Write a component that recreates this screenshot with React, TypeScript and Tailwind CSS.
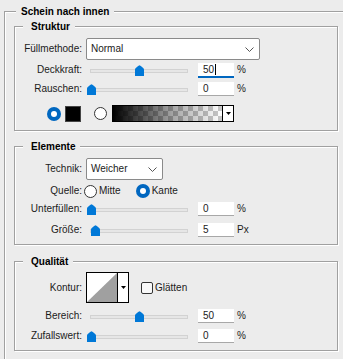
import React from 'react';

const Thumb = ({ center }: { center: number }) => (
  <svg
    className="absolute bottom-[1px]"
    style={{ left: center - 4.5 }}
    width="9"
    height="11"
    viewBox="0 0 9 11"
  >
    <path d="M4.5 0.3 C6 1.3 9 3 9 4.5 V11 H0 V4.5 C0 3 3 1.3 4.5 0.3 Z" fill="#0078d7" />
  </svg>
);

const Slider = ({ center }: { center: number }) => (
  <div className="relative flex items-end w-[106px] h-[14px] ml-[4px]">
    <div className="mx-[4px] mb-[4px] h-[4px] w-full bg-[#e6e6e6] border border-[#d2d2d2]" />
    <Thumb center={center} />
  </div>
);

const NumBox = ({ value, focused = false }: { value: string; focused?: boolean }) => (
  <div
    className={`ml-[6px] w-[36px] bg-white pl-[5px] flex items-center ${
      focused ? 'border-b-2 border-[#0067c0] h-[15px]' : 'border-b border-[#a8a8a8] h-[14px]'
    }`}
  >
    {value}
    {focused && <span className="ml-[1px] w-px h-[11px] bg-black" />}
  </div>
);

const Chevron = () => (
  <svg width="9" height="5" viewBox="0 0 9 5">
    <path d="M0.5 0.5 L4.5 4.5 L8.5 0.5" fill="none" stroke="#555" strokeWidth="1" />
  </svg>
);

const DownArrow = () => (
  <svg width="5" height="3" viewBox="0 0 5 3">
    <path d="M0 0 H5 L2.5 3 Z" fill="#000" />
  </svg>
);

const RadioOn = () => (
  <svg width="14" height="14" viewBox="0 0 14 14" className="shrink-0">
    <circle cx="7" cy="7" r="7" fill="#0067c0" />
    <circle cx="7" cy="7" r="3" fill="#fff" />
  </svg>
);

const RadioOff = () => <div className="w-[13px] h-[13px] rounded-full border border-[#333] bg-white shrink-0" />;

const Label = ({ children }: { children: React.ReactNode }) => (
  <div className="w-[67px] text-right shrink-0">{children}</div>
);

const SliderRow = ({
  label,
  center,
  value,
  unit,
  focused,
  mt,
}: {
  label: string;
  center: number;
  value: string;
  unit: string;
  focused?: boolean;
  mt: string;
}) => (
  <div className={`flex items-start h-[14px] ${mt}`}>
    <Label>{label}</Label>
    <Slider center={center} />
    <NumBox value={value} focused={focused} />
    <div className="ml-[3px]">{unit}</div>
  </div>
);

const Group = ({
  title,
  className,
  children,
}: {
  title: string;
  className: string;
  children: React.ReactNode;
}) => (
  <fieldset
    className={`w-[324px] border border-[#a0a0a0] shadow-[inset_1px_1px_0_#fff,1px_1px_0_#fff] ${className}`}
  >
    <legend className="ml-[8px] pl-[8px] pr-[5px] font-bold leading-[13px] bg-[#ececec] text-black">
      {title}
    </legend>
    {children}
  </fieldset>
);

export default function App() {
  return (
    <div
      className="w-[343px] h-[359px] overflow-hidden bg-[#ececec] text-[10px] leading-[14px] text-[#1b1b1b]"
      style={{ fontFamily: '"Liberation Sans", Arial, sans-serif' }}
    >
      <fieldset className="mt-[5px] ml-[4px] w-[360px] pl-[9px] pt-[2px] pb-[20px] border border-[#a0a0a0] shadow-[inset_1px_1px_0_#fff]">
        <legend className="ml-[2px] px-[5px] font-bold leading-[13px] bg-[#ececec] text-black">
          Schein nach innen
        </legend>

        {/* Struktur */}
        <Group title="Struktur" className="pb-[8px]">
          <div className="flex items-center h-[22px] mt-[5px]">
            <Label>Füllmethode:</Label>
            <div className="ml-[4px] w-[174px] h-[22px] bg-white border border-[#8a8a8a] rounded-[2px] flex items-center justify-between pl-[4px] pr-[5px]">
              <span>Normal</span>
              <Chevron />
            </div>
          </div>
          <SliderRow label="Deckkraft:" center={53.5} value="50" unit="%" focused mt="mt-[3px]" />
          <SliderRow label="Rauschen:" center={5} value="0" unit="%" mt="mt-[5px]" />
          <div className="flex items-center h-[17px] mt-[9px] pl-[32px]">
            <RadioOn />
            <div className="ml-[4px] w-[16px] h-[16px] bg-black border border-[#444]" />
            <div className="ml-[13px]">
              <RadioOff />
            </div>
            <div className="ml-[5px] w-[122px] h-[17px] border border-black flex">
              <div className="flex-1 [background-image:linear-gradient(to_right,#000,rgba(0,0,0,0.35)_55%,rgba(0,0,0,0)),repeating-conic-gradient(#c8c8c8_0_25%,#fff_0_50%)] [background-size:100%_100%,10px_10px]" />
              <div className="w-[11px] border-l border-black bg-white flex items-center justify-center">
                <DownArrow />
              </div>
            </div>
          </div>
        </Group>

        {/* Elemente */}
        <Group title="Elemente" className="mt-[9px] pb-[7px]">
          <div className="flex items-center h-[22px] mt-[5px]">
            <Label>Technik:</Label>
            <div className="ml-[4px] w-[77px] h-[22px] bg-white border border-[#8a8a8a] rounded-[2px] flex items-center justify-between pl-[4px] pr-[5px]">
              <span>Weicher</span>
              <Chevron />
            </div>
          </div>
          <div className="flex items-center h-[14px] mt-[4px]">
            <Label>Quelle:</Label>
            <div className="ml-[2px]">
              <RadioOff />
            </div>
            <span className="ml-[2px]">Mitte</span>
            <div className="ml-[15px]">
              <RadioOn />
            </div>
            <span className="ml-[2px]">Kante</span>
          </div>
          <SliderRow label="Unterfüllen:" center={5} value="0" unit="%" mt="mt-[4px]" />
          <SliderRow label="Größe:" center={9.5} value="5" unit="Px" mt="mt-[7px]" />
        </Group>

        {/* Qualität */}
        <Group title="Qualität" className="mt-[10px] pb-[7px]">
          <div className="flex items-center h-[31px] mt-[4px]">
            <Label>Kontur:</Label>
            <div className="ml-[4px] w-[43px] h-[31px] border border-black bg-white flex">
              <svg width="30" height="29" viewBox="0 0 30 29" className="block">
                <path d="M0 29 L30 0 V29 Z" fill="#a0a0a0" />
              </svg>
              <div className="flex-1 border-l border-black flex items-center justify-center">
                <DownArrow />
              </div>
            </div>
            <div className="ml-[12px] w-[12px] h-[12px] border border-[#333] rounded-[2px] bg-[#f8f8f8]" />
            <span className="ml-[2px]">Glätten</span>
          </div>
          <SliderRow label="Bereich:" center={53} value="50" unit="%" mt="mt-[6px]" />
          <SliderRow label="Zufallswert:" center={5} value="0" unit="%" mt="mt-[6px]" />
        </Group>
      </fieldset>
    </div>
  );
}
